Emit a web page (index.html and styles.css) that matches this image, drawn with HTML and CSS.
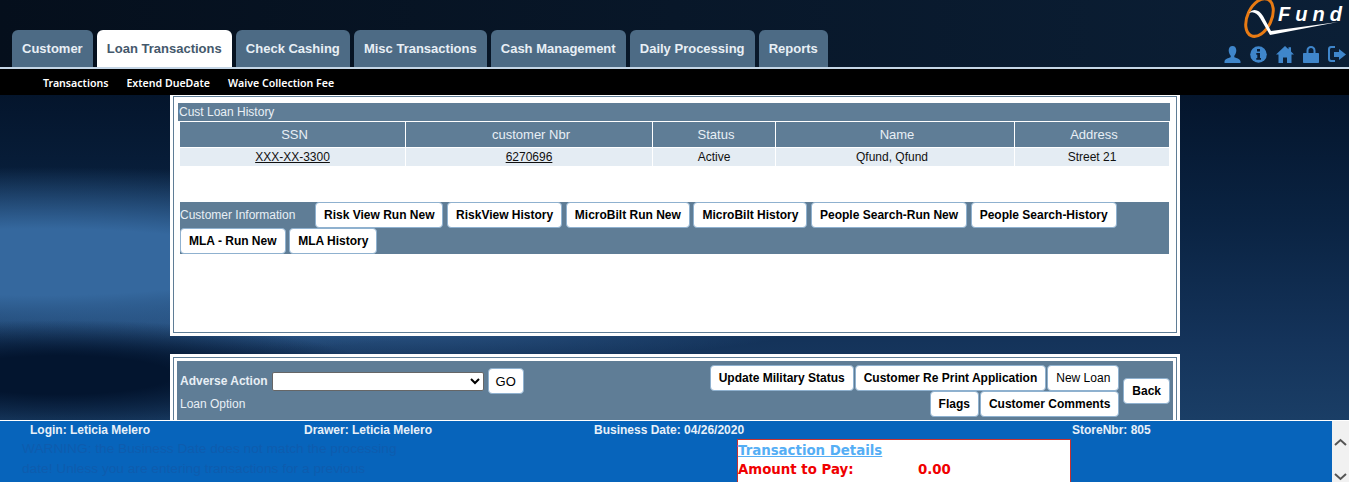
FILE: index.html
```html
<!DOCTYPE html>
<html lang="en">

<head>
    <meta charset="UTF-8">
    <title>QFund</title>
    <link rel="stylesheet" href="styles.css">
</head>

<body>
    <header class="top">
        <ul class="tabs">
            <li><a href="#">Customer</a></li>
            <li class="active"><a href="#">Loan Transactions</a></li>
            <li><a href="#">Check Cashing</a></li>
            <li><a href="#">Misc Transactions</a></li>
            <li><a href="#">Cash Management</a></li>
            <li><a href="#">Daily Processing</a></li>
            <li><a href="#">Reports</a></li>
        </ul>
        <div class="brand">
            <div class="logo">
                <svg class="logo-mark" width="106" height="43" viewBox="0 0 106 43">
                    <ellipse cx="16.500" cy="18.500" rx="12" ry="20" transform="rotate(25 16.500 18.500)" fill="none" stroke="#e87b14" stroke-width="3"/>
                    <path d="M6 14C10 9 16 10 20 17L28 32L95 23L27 36L17 19C14 14 10 12 6 14Z" fill="#fff"/>
                </svg>
                <span class="logo-text">Fund</span>
            </div>
            <div class="icons">
                <svg width="17" height="17" viewBox="0 0 17 17"><path d="M8.500 0C11 0 12.300 2 12.300 4.500C12.300 7 11 9 10.300 9.800V11.200C12.500 12 16.500 13 16.500 15.500V17H0.500V15.500C0.500 13 4.500 12 6.700 11.200V9.800C6 9 4.700 7 4.700 4.500C4.700 2 6 0 8.500 0Z"/></svg>
                <svg width="17" height="17" viewBox="0 0 17 17"><circle cx="8.500" cy="8.500" r="8.300"/><path fill="#0b1e35" d="M7 3H10V5.500H7ZM6.300 7H10V12H11V13.800H6.300V12H7.300V8.800H6.300Z"/></svg>
                <svg width="18" height="17" viewBox="0 0 18 17"><path d="M9 0L12.500 3.200V1.200H15V5.500L18 8.500H15.500V17H11V11.500H7V17H2.500V8.500H0Z"/></svg>
                <svg width="16" height="17" viewBox="0 0 16 17"><path d="M3.500 7V4.500C3.500 1.500 5.500 0 8 0C10.500 0 12.500 1.500 12.500 4.500V7H15C15.600 7 16 7.400 16 8V16C16 16.600 15.600 17 15 17H1C0.400 17 0 16.600 0 16V8C0 7.400 0.400 7 1 7ZM5.500 7H10.500V4.500C10.500 3 9.500 2 8 2C6.500 2 5.500 3 5.500 4.500Z"/></svg>
                <svg width="18" height="17" viewBox="0 0 18 17"><path d="M7 2H3.500C2.600 2 2 2.600 2 3.500V12.500C2 13.400 2.600 14 3.500 14H7V16H3C1.300 16 0 14.700 0 13V3C0 1.300 1.300 0 3 0H7ZM11 3L18 8.500L11 14V11H6V6H11Z"/></svg>
            </div>
        </div>
    </header>
    <nav class="subnav">
        <a href="#">Transactions</a>
        <a href="#">Extend DueDate</a>
        <a href="#">Waive Collection Fee</a>
    </nav>

    <main class="content">
        <section class="panel history">
            <div class="panel-title">Cust Loan History</div>
            <table class="loans">
                <thead>
                    <tr>
                        <th class="col-ssn">SSN</th>
                        <th class="col-nbr">customer Nbr</th>
                        <th class="col-status">Status</th>
                        <th class="col-name">Name</th>
                        <th class="col-addr">Address</th>
                    </tr>
                </thead>
                <tbody>
                    <tr>
                        <td><a href="#">XXX-XX-3300</a></td>
                        <td><a href="#">6270696</a></td>
                        <td>Active</td>
                        <td class="cell-name">Qfund, Qfund</td>
                        <td>Street 21</td>
                    </tr>
                </tbody>
            </table>
            <div class="info-bar">
                <span class="info-label">Customer Information</span>
                <button class="btn">Risk View Run New</button>
                <button class="btn">RiskView History</button>
                <button class="btn">MicroBilt Run New</button>
                <button class="btn">MicroBilt History</button>
                <button class="btn">People Search-Run New</button>
                <button class="btn">People Search-History</button>
                <button class="btn">MLA - Run New</button>
                <button class="btn">MLA History</button>
            </div>
        </section>

        <section class="panel actions">
            <div class="actions-bar">
                <div class="actions-left">
                    <div class="adverse">
                        <label for="adverse">Adverse Action</label>
                        <select id="adverse"></select>
                        <button class="btn btn-go">GO</button>
                    </div>
                    <div class="loan-option">Loan Option</div>
                </div>
                <div class="actions-right">
                    <div class="actions-rows">
                        <div class="btn-row">
                            <button class="btn">Update Military Status</button>
                            <button class="btn">Customer Re Print Application</button>
                            <button class="btn btn-plain">New Loan</button>
                        </div>
                        <div class="btn-row">
                            <button class="btn">Flags</button>
                            <button class="btn">Customer Comments</button>
                        </div>
                    </div>
                    <button class="btn btn-back">Back</button>
                </div>
            </div>
        </section>
    </main>

    <footer class="status">
        <div class="status-body">
            <div class="status-line">
                <span class="st-login">Login: Leticia Melero</span>
                <span class="st-drawer">Drawer: Leticia Melero</span>
                <span class="st-date">Business Date: 04/26/2020</span>
                <span class="st-store">StoreNbr: 805</span>
            </div>
            <div class="status-lower">
                <p class="warning">WARNING: the Business Date does not match the processing<br>date! Unless you are entering transactions for a previous</p>
                <div class="details">
                    <a href="#">Transaction Details</a>
                    <div class="due"><span class="due-label">Amount to Pay:</span><span>0.00</span></div>
                </div>
            </div>
        </div>
        <div class="scroller">
            <svg width="17" height="10" viewBox="0 0 17 10"><path d="M3 8L8.500 3L14 8" fill="none" stroke="#555" stroke-width="2"/></svg>
            <svg width="17" height="10" viewBox="0 0 17 10"><path d="M3 2L8.500 7L14 2" fill="none" stroke="#555" stroke-width="2"/></svg>
        </div>
    </footer>
</body>

</html>
```

FILE: styles.css
```css
html,
body {
    height: 100%;
}

body {
    margin: 0;
    height: 100vh;
    overflow: hidden;
    display: flex;
    flex-direction: column;
    font-family: "Liberation Sans", Arial, sans-serif;
    font-size: 12px;
    background-color: #0a1c33;
    background-image:
        radial-gradient(ellipse 320px 55px at 60px 375px, #03152f 35%, transparent),
        radial-gradient(ellipse 640px 95px at 40px 262px, #35689e 35%, transparent),
        radial-gradient(ellipse 420px 34px at 380px 328px, rgba(52, 98, 150, 0.75), transparent),
        linear-gradient(180deg, #04152c 95px, #0a2342 220px, #14335a 340px, #1a3e66 420px);
}

.top {
    height: 67px;
    flex: none;
    display: flex;
    justify-content: space-between;
    align-items: flex-end;
    padding-left: 12px;
    box-sizing: border-box;
    background: linear-gradient(90deg, #050f1c, #0b1f36);
}

.tabs {
    list-style: none;
    display: flex;
    gap: 4.150px;
    margin: 0;
    padding: 0;
}

.tabs a {
    display: block;
    height: 37px;
    line-height: 37px;
    padding: 0 10px;
    font-size: 13px;
    font-weight: bold;
    color: #e8eff5;
    text-decoration: none;
    background-color: #4d6b85;
    border-radius: 6px 6px 0 0;
}

.tabs .active a {
    background-color: #fff;
    color: #44586b;
}

.brand {
    width: 112px;
    display: flex;
    flex-direction: column;
    align-items: flex-end;
}

.logo {
    position: relative;
    width: 106px;
    height: 43px;
}

.logo-mark {
    position: absolute;
    left: 0;
    top: 0;
}

.logo-text {
    position: absolute;
    left: 35px;
    top: 4px;
    font-size: 20px;
    font-style: italic;
    font-weight: bold;
    letter-spacing: 5px;
    color: #fff;
}

.icons {
    display: flex;
    gap: 9px;
    padding: 4px 3px 4px 0;
}

.icons svg {
    fill: #3f86cb;
    display: block;
}

.subnav {
    flex: none;
    height: 28px;
    box-sizing: border-box;
    border-top: 2px solid #c5d6e6;
    background-color: #000;
    display: flex;
    align-items: center;
    gap: 18px;
    padding: 2px 0 0 43px;
}

.subnav a {
    font-family: "Noto Sans", sans-serif;
    font-size: 10.600px;
    font-weight: 600;
    color: #fff;
    text-decoration: none;
}

.content {
    flex: 1;
    min-height: 0;
    overflow: hidden;
    padding-left: 170px;
}

.panel {
    width: 1010px;
    box-sizing: border-box;
    background-color: #fff;
    border: 3px solid #fff;
    box-shadow: inset 0 0 0 1px #5f7d96;
}

.history {
    height: 241px;
    padding: 7px 5px;
    margin-bottom: 18px;
    border-top-width: 1px;
}

.panel-title {
    height: 18px;
    line-height: 18px;
    padding-left: 1px;
    background-color: #5f7d96;
    color: #e8eff5;
    width: 992px;
    box-sizing: border-box;
}

.loans {
    width: 989px;
    margin: 1px 0 0 2px;
    border-collapse: collapse;
    table-layout: fixed;
}

.loans th,
.loans td {
    border-left: 1px solid #fff;
    text-align: center;
    padding: 0;
}

.loans th:first-child,
.loans td:first-child {
    border-left: 0;
}

.loans th {
    height: 25px;
    background-color: #5f7d96;
    color: #e8eff5;
    font-size: 13px;
    font-weight: normal;
    text-indent: 4px;
    border-bottom: 1px solid #fff;
}

.loans td {
    height: 18px;
    background-color: #e4ecf3;
    color: #111;
}

.loans td.cell-name {
    padding-right: 6px;
}

.loans a {
    color: #111;
}

.col-ssn {
    width: 225px;
}

.col-nbr {
    width: 246px;
}

.col-status {
    width: 122px;
}

.col-name {
    width: 238px;
}

.info-bar {
    width: 989px;
    margin: 36px 0 0 2px;
    background-color: #5f7d96;
    display: flex;
    flex-wrap: wrap;
    align-items: center;
    gap: 0 3.600px;
}

.info-label {
    width: 131.400px;
    color: #e8eff5;
}

.btn {
    height: 26px;
    padding: 0 8px;
    background-color: #fff;
    border: 1px solid #8fb1cf;
    border-radius: 4px;
    color: #000;
    font-family: "Liberation Sans", Arial, sans-serif;
    font-size: 12px;
    font-weight: bold;
}

.actions {
    height: 80px;
    padding: 4px;
}

.actions-bar {
    display: flex;
    justify-content: space-between;
    height: 62px;
    background-color: #5f7d96;
    padding: 4px 3px 0 3px;
    box-sizing: border-box;
}

.adverse {
    display: flex;
    align-items: center;
    gap: 4px;
    margin-top: 3px;
}

.adverse label {
    color: #e8eff5;
    font-weight: bold;
}

.adverse select {
    width: 212px;
    height: 19px;
    background-color: #fff;
    border: 1px solid #666;
    border-radius: 2px;
}

.btn-go {
    font-weight: normal;
    font-size: 13px;
    padding: 0 7px;
}

.loan-option {
    color: #e8eff5;
    margin-top: 3px;
}

.actions-right {
    display: flex;
    align-items: center;
    gap: 4px;
    height: 52px;
}

.actions-rows {
    display: flex;
    flex-direction: column;
    align-items: flex-end;
}

.btn-row {
    display: flex;
    gap: 1px;
}

.btn-plain {
    font-weight: normal;
}

.status {
    flex: none;
    height: 62px;
    display: flex;
    background-color: #0764bb;
    border-top: 1px solid #fff;
    box-sizing: border-box;
    color: #e8f0f8;
    margin-top: -1px;
}

.status-body {
    flex: 1;
    min-width: 0;
}

.status-line {
    position: relative;
    height: 18px;
    line-height: 19px;
    font-weight: bold;
}

.status-line span {
    position: absolute;
    top: 0;
}

.st-login {
    left: 30px;
}

.st-drawer {
    left: 304px;
}

.st-date {
    left: 594px;
}

.st-store {
    left: 1072px;
}

.status-lower {
    display: flex;
    justify-content: space-between;
    padding: 0 261px 0 22px;
}

.warning {
    margin: 0;
    font-size: 13.700px;
    line-height: 20px;
    color: #0e5cae;
    white-space: nowrap;
}

.details {
    width: 334px;
    height: 44px;
    box-sizing: border-box;
    background-color: #fff;
    border: 1px solid #c8322f;
    border-bottom: 0;
    font-family: "DejaVu Sans", sans-serif;
    font-size: 13.330px;
    font-weight: bold;
}

.details a {
    display: block;
    color: #55aef5;
    margin-top: 3px;
}

.due {
    display: flex;
    color: #f00000;
    margin-top: 4px;
}

.due-label {
    width: 180px;
}

.scroller {
    width: 17px;
    background-color: #f1f1f1;
    display: flex;
    flex-direction: column;
    justify-content: space-between;
    padding-top: 16px;
}

.scroller svg {
    display: block;
}
```
